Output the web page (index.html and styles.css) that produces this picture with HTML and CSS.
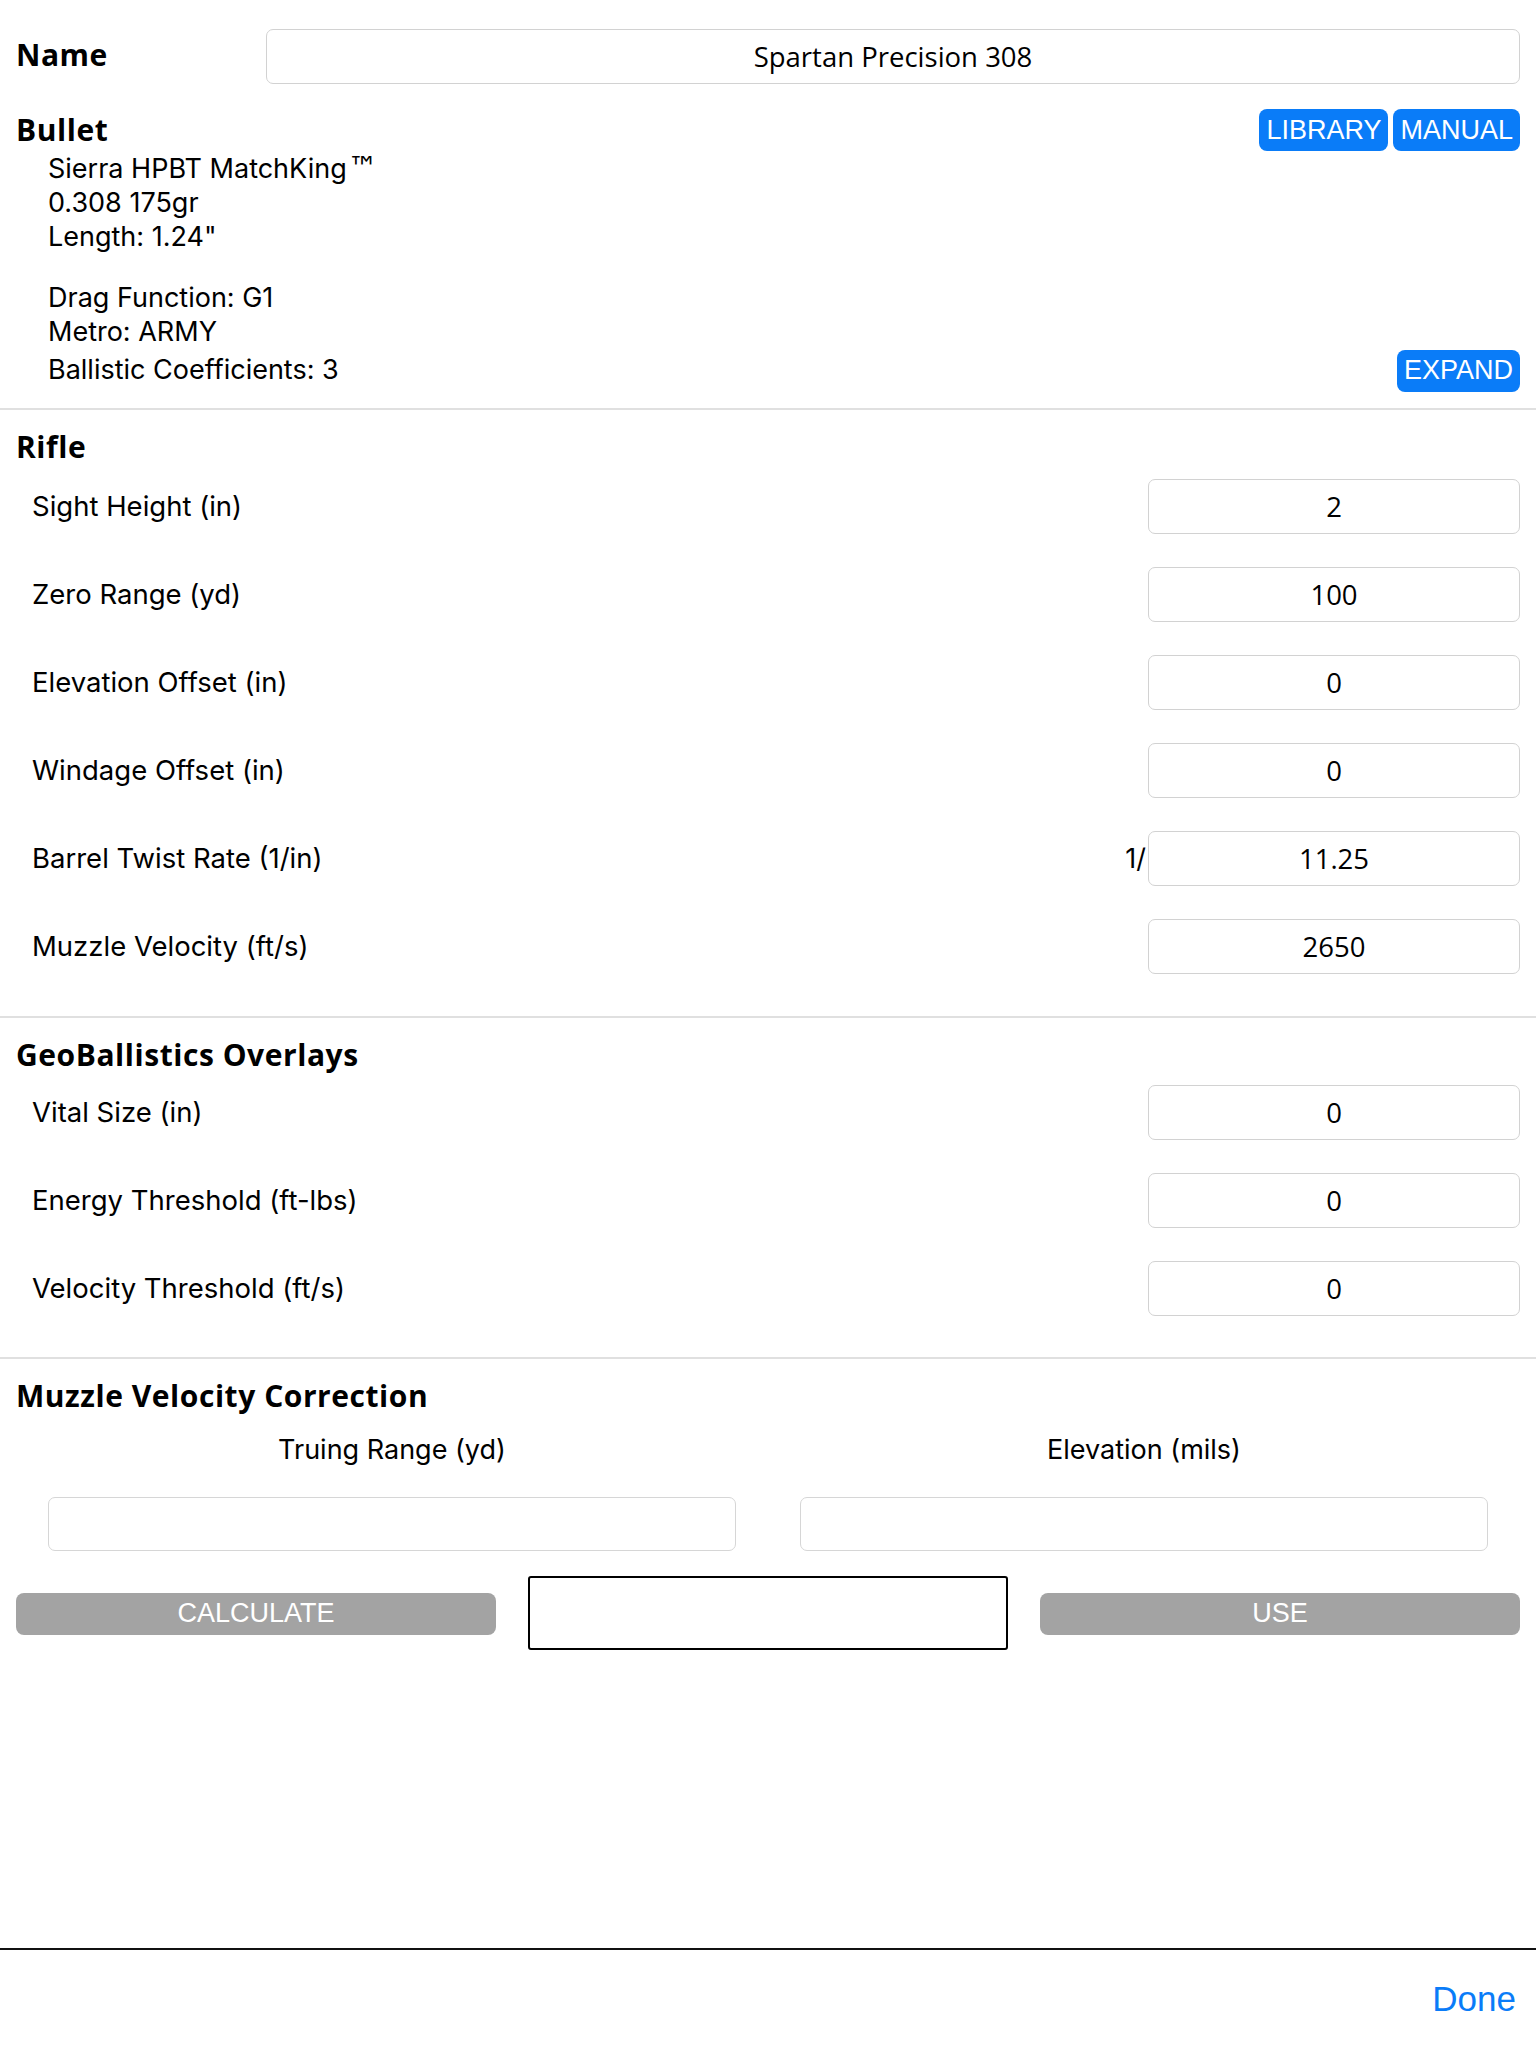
FILE: index.html
```html
<!DOCTYPE html>
<html>
<head>
<meta charset="utf-8">
<link rel="stylesheet" href="styles.css">
</head>
<body>
<div class="page">
  <main class="content">
    <section class="name-row">
      <div class="head">Name</div>
      <div class="field name-field">Spartan Precision 308</div>
    </section>

    <section class="bullet">
      <div class="bullet-head">
        <div class="head">Bullet</div>
        <div class="btns">
          <span class="btn-blue">LIBRARY</span>
          <span class="btn-blue">MANUAL</span>
        </div>
      </div>
      <div class="info">
        <div class="line">Sierra HPBT MatchKing<span class="tm">™</span></div>
        <div class="line">0.308 175gr</div>
        <div class="line">Length: 1.24"</div>
      </div>
      <div class="info info2">
        <div class="line">Drag Function: G1</div>
        <div class="line">Metro: ARMY</div>
        <div class="line last-line">
          <span>Ballistic Coefficients: 3</span>
          <span class="btn-blue">EXPAND</span>
        </div>
      </div>
    </section>

    <hr class="divider">

    <section class="group rifle">
      <div class="head sec-head">Rifle</div>
      <div class="rows">
        <div class="row"><span class="label">Sight Height (in)</span><div class="field val">2</div></div>
        <div class="row"><span class="label">Zero Range (yd)</span><div class="field val">100</div></div>
        <div class="row"><span class="label">Elevation Offset (in)</span><div class="field val">0</div></div>
        <div class="row"><span class="label">Windage Offset (in)</span><div class="field val">0</div></div>
        <div class="row"><span class="label">Barrel Twist Rate (1/in)</span><div class="val-wrap"><span class="prefix">1/</span><div class="field val">11.25</div></div></div>
        <div class="row"><span class="label">Muzzle Velocity (ft/s)</span><div class="field val">2650</div></div>
      </div>
    </section>

    <hr class="divider">

    <section class="group geo">
      <div class="head sec-head">GeoBallistics Overlays</div>
      <div class="rows">
        <div class="row"><span class="label">Vital Size (in)</span><div class="field val">0</div></div>
        <div class="row"><span class="label">Energy Threshold (ft-lbs)</span><div class="field val">0</div></div>
        <div class="row"><span class="label">Velocity Threshold (ft/s)</span><div class="field val">0</div></div>
      </div>
    </section>

    <hr class="divider">

    <section class="group mvc">
      <div class="head sec-head">Muzzle Velocity Correction</div>
      <div class="mvc-cols">
        <div class="mvc-col">
          <div class="mvc-label">Truing Range (yd)</div>
          <div class="field mvc-field"></div>
        </div>
        <div class="mvc-col">
          <div class="mvc-label">Elevation (mils)</div>
          <div class="field mvc-field"></div>
        </div>
      </div>
      <div class="actions">
        <span class="btn-gray">CALCULATE</span>
        <div class="result"></div>
        <span class="btn-gray">USE</span>
      </div>
    </section>
  </main>

  <footer class="toolbar">
    <span class="done">Done</span>
  </footer>
</div>
</body>
</html>
```

FILE: styles.css
```css
* { box-sizing: border-box; }

html, body {
  margin: 0;
  padding: 0;
  background: #ffffff;
}

body {
  font-family: Inter, "Liberation Sans", sans-serif;
  color: #000;
}

.page {
  min-height: 2048px;
  display: flex;
  flex-direction: column;
}

.content {
  flex: 1;
}

.head {
  font-family: "Open Sans", "Noto Sans", sans-serif;
  font-weight: 700;
  font-size: 30px;
  line-height: 40px;
  letter-spacing: 0.55px;
}

.field {
  border: 1.5px solid #d2d2d2;
  border-radius: 7px;
  background: #fff;
  display: flex;
  align-items: center;
  justify-content: center;
  font-family: "Open Sans", "Noto Sans", sans-serif;
  font-size: 27.5px;
  color: #000;
}

/* Name */
.name-row {
  display: grid;
  grid-template-columns: 250px 1fr;
  align-items: center;
  padding: 29px 16px 0 16px;
}

.name-row .head {
  margin-top: -3px;
}

.name-field {
  height: 55px;
}

/* Bullet */
.bullet {
  padding: 0 16px 16px 16px;
}

.bullet-head {
  display: flex;
  justify-content: space-between;
  align-items: center;
  margin-top: 25px;
  height: 42px;
}

.btns {
  display: flex;
  gap: 5px;
}

.btn-blue {
  display: inline-flex;
  align-items: center;
  justify-content: center;
  height: 42px;
  padding: 0 7px;
  background: #0a7cf8;
  color: #fff;
  border-radius: 8px;
  font-family: "Liberation Sans", Arial, sans-serif;
  font-size: 27px;
}

.info {
  padding-left: 32px;
  font-size: 27px;
}

.tm {
  font-family: "DejaVu Sans", sans-serif;
  font-size: 30px;
  margin-left: 1px;
}

.line {
  height: 34.5px;
  line-height: 34.5px;
}

.info2 {
  margin-top: 26px;
}

.last-line {
  height: 42px;
  display: flex;
  justify-content: space-between;
  align-items: center;
}

.divider {
  border: none;
  height: 2px;
  background: #e0e0e0;
  margin: 0;
}

/* Groups */
.group {
  padding: 17px 16px 0 16px;
}

.rows {
  display: flex;
  flex-direction: column;
  gap: 33px;
  margin-top: 12px;
}

.row {
  display: flex;
  justify-content: space-between;
  align-items: center;
  height: 55px;
  padding-left: 16px;
}

.label {
  font-size: 27.5px;
}

.val {
  width: 372px;
  height: 55px;
}

.val-wrap {
  display: flex;
  align-items: center;
}

.prefix {
  font-size: 27px;
  margin-right: 2px;
}

.rifle .rows { margin-bottom: 42px; }
.geo .rows { margin-top: 10px; margin-bottom: 41px; }

/* MVC */
.mvc-cols {
  display: grid;
  grid-template-columns: 1fr 1fr;
  margin-top: 14px;
}

.mvc-col {
  display: flex;
  flex-direction: column;
  align-items: center;
  padding: 0 32px;
}

.mvc-label {
  font-size: 27px;
  line-height: 40px;
}

.mvc-field {
  align-self: stretch;
  height: 54px;
  margin-top: 27px;
  border-width: 1px;
  border-color: #d6d6d6;
}

.actions {
  display: grid;
  grid-template-columns: 1fr 1fr 1fr;
  column-gap: 32px;
  align-items: center;
  margin-top: 25px;
}

.btn-gray {
  display: flex;
  align-items: center;
  justify-content: center;
  height: 42px;
  margin-top: 2px;
  background: #a3a3a3;
  color: #fff;
  border-radius: 8px;
  font-family: "Liberation Sans", Arial, sans-serif;
  font-size: 27px;
}

.result {
  height: 74px;
  border: 2.5px solid #000;
  border-radius: 3px;
}

/* Toolbar */
.toolbar {
  height: 100px;
  border-top: 2px solid #111;
  display: flex;
  justify-content: flex-end;
  align-items: center;
  padding: 0 20px;
}

.done {
  color: #0a7cf8;
  font-family: "Liberation Sans", Arial, sans-serif;
  font-size: 35px;
}
```
